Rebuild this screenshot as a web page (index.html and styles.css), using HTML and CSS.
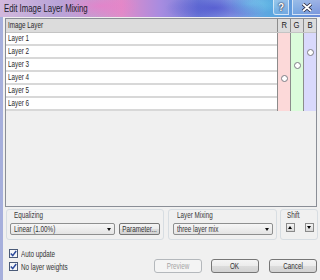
FILE: index.html
```html
<!DOCTYPE html>
<html lang="en">
<head>
  <meta charset="UTF-8">
  <title>Edit Image Layer Mixing</title>
  <link rel="stylesheet" href="styles.css">
</head>
<body>
  <div class="titlebar">
    <span class="title t">Edit Image Layer Mixing</span>
    <div class="caption">
      <span class="cap-btn help">?</span>
      <span class="cap-btn close">
        <svg width="10" height="9" viewBox="0 0 10 9"><path d="M1 1 L9 8 M9 1 L1 8" stroke="#2a2a40" stroke-width="3.4"/><path d="M1 1 L9 8 M9 1 L1 8" stroke="#fff" stroke-width="1.8"/></svg>
      </span>
    </div>
  </div>

  <div class="client">
    <div class="layers">
      <div class="row head">
        <div class="name"><span class="t">Image Layer</span></div>
        <div class="ch"><span class="t">R</span></div><div class="ch"><span class="t">G</span></div><div class="ch"><span class="t">B</span></div>
      </div>
      <div class="row">
        <div class="name"><span class="t">Layer 1</span></div>
        <div class="ch r"></div><div class="ch g"></div><div class="ch b"></div>
      </div>
      <div class="row">
        <div class="name"><span class="t">Layer 2</span></div>
        <div class="ch r"></div><div class="ch g"></div><div class="ch b"><span class="dot"></span></div>
      </div>
      <div class="row">
        <div class="name"><span class="t">Layer 3</span></div>
        <div class="ch r"></div><div class="ch g"><span class="dot"></span></div><div class="ch b"></div>
      </div>
      <div class="row">
        <div class="name"><span class="t">Layer 4</span></div>
        <div class="ch r"><span class="dot"></span></div><div class="ch g"></div><div class="ch b"></div>
      </div>
      <div class="row">
        <div class="name"><span class="t">Layer 5</span></div>
        <div class="ch r"></div><div class="ch g"></div><div class="ch b"></div>
      </div>
      <div class="row">
        <div class="name"><span class="t">Layer 6</span></div>
        <div class="ch r"></div><div class="ch g"></div><div class="ch b"></div>
      </div>
    </div>

    <div class="groups">
      <div class="group equalizing">
        <div class="group-label"><span class="t">Equalizing</span></div>
        <div class="controls">
          <div class="combo eq-combo"><span class="t">Linear (1.00%)</span><span class="arrow"></span></div>
          <div class="btn small"><span class="t">Parameter...</span></div>
        </div>
      </div>
      <div class="group mixing">
        <div class="group-label"><span class="t">Layer Mixing</span></div>
        <div class="controls">
          <div class="combo mix-combo"><span class="t">three layer mix</span><span class="arrow"></span></div>
        </div>
      </div>
      <div class="group shift">
        <div class="group-label"><span class="t">Shift</span></div>
        <div class="controls">
          <div class="spin up"></div>
          <div class="spin down"></div>
        </div>
      </div>
    </div>

    <div class="footer">
      <div class="checks">
        <label class="check"><span class="box"><svg width="7" height="7" viewBox="0 0 7 7"><path d="M0.8 3.6 L2.7 5.6 L6.2 1" fill="none" stroke="#2c4a9c" stroke-width="1.5"/></svg></span><span class="t">Auto update</span></label>
        <label class="check"><span class="box"><svg width="7" height="7" viewBox="0 0 7 7"><path d="M0.8 3.6 L2.7 5.6 L6.2 1" fill="none" stroke="#2c4a9c" stroke-width="1.5"/></svg></span><span class="t">No layer weights</span></label>
      </div>
      <div class="actions">
        <div class="btn disabled"><span class="t">Preview</span></div>
        <div class="btn"><span class="t">OK</span></div>
        <div class="btn"><span class="t">Cancel</span></div>
      </div>
    </div>
  </div>
</body>
</html>
```

FILE: styles.css
```css
* {
  box-sizing: border-box;
}
body {
  margin: 0;
  width: 320px;
  height: 280px;
  overflow: hidden;
  font-family: "Liberation Sans", Arial, sans-serif;
  font-size: 9px;
  color: #222;
  background: #f0f0f0;
}

/* the dialog font is narrow, squeeze the text runs */
.t {
  display: inline-block;
  white-space: nowrap;
  transform: scaleX(0.7);
  transform-origin: left center;
}

/* title bar */
.titlebar {
  height: 17px;
  display: flex;
  align-items: flex-start;
  background:
    radial-gradient(ellipse 40px 12px at 100px 6px, rgba(240, 120, 200, 0.6), transparent),
    radial-gradient(ellipse 50px 14px at 215px 8px, rgba(60, 60, 200, 0.55), transparent),
    radial-gradient(ellipse 30px 10px at 250px 4px, rgba(120, 220, 240, 0.6), transparent),
    linear-gradient(90deg, #d2b8dc 0%, #b8a4d8 18%, #c89ad0 30%, #e08cc8 38%, #a88ce0 50%, #6f7ed8 62%, #8a9ce4 72%, #5aa8e0 84%, #6a88d8 100%);
}
.title {
  margin: 3px 0 0 4px;
  font-size: 10px;
  color: #1c1c2c;
  transform: scaleX(0.78);
}
.caption {
  margin-left: auto;
  display: flex;
  gap: 3px;
}
.cap-btn {
  height: 15px;
  display: flex;
  align-items: center;
  justify-content: center;
  border: 1px solid rgba(255, 255, 255, 0.6);
  border-top: none;
  background: linear-gradient(rgba(255, 255, 255, 0.35), rgba(255, 255, 255, 0.12));
  color: #fff;
  font-weight: bold;
  font-size: 10px;
  text-shadow: 0 0 2px #202040, 0 0 1px #202040;
}
.help {
  width: 16px;
  border-radius: 0 0 0 3px;
}
.close {
  width: 28px;
  border-right: none;
}

/* client area */
.client {
  height: 263px;
  border-left: 3px solid #a6afdc;
  padding: 1px 3px 0 2px;
}

.layers {
  width: 312px;
  height: 189px;
  border: 1px solid #8a8e96;
  background: #f0f0f0;
}
.row {
  display: flex;
  height: 13px;
}
.name {
  flex: 1;
  background: #fff;
  border-bottom: 2px solid #d8d8d8;
  padding-left: 2px;
  line-height: 11px;
  color: #2a2a2a;
}
.ch {
  width: 13px;
  border-left: 1px solid #8c8c8c;
  display: flex;
  align-items: center;
  justify-content: center;
}
.ch .t { transform-origin: center; }
.ch.r { background: #fcd9d9; }
.ch.g { background: #dbfcdb; }
.ch.b { background: #d9d9fc; }

.row.head {
  height: 14px;
  border-bottom: 1px solid #c4c4c4;
}
.row.head .name,
.row.head .ch {
  background: #dcdcdc;
  border-bottom: none;
  line-height: 13px;
}
.row.head .ch .t { transform: scaleX(0.85); }
.dot {
  width: 7px;
  height: 7px;
  border: 1px solid #7c7c84;
  border-radius: 50%;
  background: #fff;
}

/* option groups */
.groups {
  display: flex;
  margin-top: 2px;
  padding-left: 1px;
}
.group {
  border: 1px solid #d7dde2;
  border-radius: 3px;
  padding: 0 3px 3px 3px;
  height: 31px;
}
.equalizing { width: 158px; }
.mixing { width: 109px; margin-left: 4px; padding-left: 4px; }
.shift { width: 40px; margin-left: 3px; padding-left: 5px; }
.group-label {
  height: 13px;
  line-height: 11px;
  padding-left: 4px;
  color: #3a3a3a;
}
.shift .group-label { padding-left: 1px; }
.controls {
  display: flex;
  gap: 4px;
}
.combo {
  height: 12px;
  border: 1px solid #8e8f8f;
  border-radius: 2px;
  background: linear-gradient(#f6f6f6, #e4e4e4);
  display: flex;
  align-items: center;
  padding: 0 3px;
  color: #333;
}
.eq-combo { width: 106px; }
.mix-combo { width: 100px; }
.arrow {
  margin-left: auto;
  width: 0;
  height: 0;
  border-left: 2.5px solid transparent;
  border-right: 2.5px solid transparent;
  border-top: 3px solid #111;
}
.spin {
  width: 9px;
  height: 9px;
  border: 1px solid #8a8a8a;
  background: linear-gradient(#f4f4f4, #d8d8d8);
  position: relative;
}
.spin.down { margin-left: 6px; }
.spin::after {
  content: "";
  position: absolute;
  left: 1px;
  top: 2px;
  border-left: 2.5px solid transparent;
  border-right: 2.5px solid transparent;
}
.spin.up::after { border-bottom: 3px solid #000; }
.spin.down::after { border-top: 3px solid #000; }

/* buttons */
.btn {
  width: 48px;
  height: 14px;
  border: 1px solid #767676;
  border-radius: 3px;
  background: linear-gradient(#f4f4f4 0%, #ebebeb 50%, #dcdcdc 51%, #d2d2d2 100%);
  display: flex;
  align-items: center;
  justify-content: center;
  color: #333;
}
.btn .t { transform-origin: center; }
.btn.small {
  width: 41px;
  height: 12px;
  border-radius: 2px;
}
.btn.disabled {
  border-color: #b4b8bc;
  background: #f4f4f4;
  color: #a4a4a4;
}

/* footer */
.footer {
  display: flex;
  align-items: flex-end;
  margin-top: 7px;
  padding-left: 4px;
}
.check {
  display: flex;
  align-items: center;
  gap: 3px;
  height: 13px;
  color: #333;
}
.box {
  width: 9px;
  height: 9px;
  border: 1px solid #4a5a78;
  background: #f4f6f8;
  display: flex;
  align-items: center;
  justify-content: center;
}
.actions {
  margin-left: auto;
  display: flex;
  gap: 9px;
}
.actions .btn:last-child { margin-left: 1px; }
```
